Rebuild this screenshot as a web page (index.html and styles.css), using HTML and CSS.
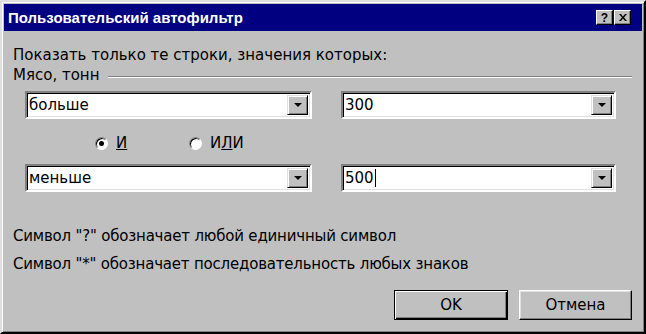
FILE: index.html
```html
<!DOCTYPE html>
<html lang="ru">
  <head>
    <meta charset="UTF-8" />
    <meta name="viewport" content="width=device-width, initial-scale=1.0" />
    <link rel="stylesheet" href="styles.css">
    <title>Пользовательский автофильтр</title>
  </head>
  <body>
    <div class="window">
      <div class="title-bar">
        <span class="title">Пользовательский автофильтр</span>
        <div class="title-buttons">
          <span class="tbtn">?</span>
          <span class="tbtn tbtn-close">
            <svg width="8" height="7" viewBox="0 0 8 7">
              <path d="M0 0h2l2 2.5L6 0h2L5 3.5 8 7H6L4 4.5 2 7H0l3-3.5z" fill="#000" />
            </svg>
          </span>
        </div>
      </div>

      <div class="content">
        <div class="line">Показать только те строки, значения которых:</div>
        <div class="group">
          <span>Мясо, тонн</span>
          <span class="groove"></span>
        </div>

        <div class="combo-row first-row">
          <div class="combo combo-op">
            <span class="combo-text">больше</span>
            <span class="drop"><i></i></span>
          </div>
          <div class="combo combo-val">
            <span class="combo-text">300</span>
            <span class="drop"><i></i></span>
          </div>
        </div>

        <div class="radio-row">
          <label class="radio radio-and">
            <span class="circle checked"></span>
            <span><u>И</u></span>
          </label>
          <label class="radio">
            <span class="circle"></span>
            <span>И<u>Л</u>И</span>
          </label>
        </div>

        <div class="combo-row">
          <div class="combo combo-op">
            <span class="combo-text">меньше</span>
            <span class="drop"><i></i></span>
          </div>
          <div class="combo combo-val">
            <span class="combo-text"><span class="caret">500</span></span>
            <span class="drop"><i></i></span>
          </div>
        </div>

        <div class="hints">
          <div class="line">Символ "?" обозначает любой единичный символ</div>
          <div class="line">Символ "*" обозначает последовательность любых знаков</div>
        </div>

        <div class="actions">
          <button class="btn btn-default">OK</button>
          <button class="btn">Отмена</button>
        </div>
      </div>
    </div>
  </body>
</html>
```

FILE: styles.css
```css
* {
  margin: 0;
  padding: 0;
  box-sizing: border-box;
}

body {
  background: #c0c0c0;
  font-family: "DejaVu Sans", Verdana, sans-serif;
  font-size: 15px;
  color: #000;
}

.window {
  width: 646px;
  height: 334px;
  padding: 2px;
  background: #c0c0c0;
  border: 2px solid;
  border-color: #dfdfdf #000 #000 #dfdfdf;
  box-shadow: inset 1px 1px #fff, inset -1px -1px #808080;
  display: flex;
  flex-direction: column;
}

.title-bar {
  height: 27px;
  background: #000080;
  display: flex;
  align-items: center;
  justify-content: space-between;
  padding: 0 11px 0 4px;
}

.title {
  color: #fff;
  font-family: "Liberation Sans", Arial, sans-serif;
  font-weight: bold;
  font-size: 15px;
}

.title-buttons {
  display: flex;
  gap: 1px;
}

.tbtn {
  width: 17px;
  height: 15px;
  background: #c0c0c0;
  border: 1px solid;
  border-color: #fff #000 #000 #fff;
  box-shadow: inset -1px -1px #808080;
  display: flex;
  align-items: center;
  justify-content: center;
  font-family: "Liberation Sans", Arial, sans-serif;
  font-weight: bold;
  font-size: 12px;
  line-height: 1;
}

.content {
  flex: 1;
  padding: 14px 10px 0 9px;
  display: flex;
  flex-direction: column;
}

.line {
  line-height: 20px;
  white-space: nowrap;
}

.group {
  display: flex;
  align-items: center;
  line-height: 20px;
}

.groove {
  flex: 1;
  margin: 3px 0 0 9px;
  border-top: 1px solid #808080;
  border-bottom: 1px solid #fff;
}

.combo-row {
  display: flex;
  gap: 29px;
  padding-left: 12px;
}

.first-row {
  margin-top: 6px;
}

.combo {
  height: 28px;
  background: #fff;
  border: 2px solid;
  border-color: #808080 #fff #fff #808080;
  box-shadow: inset 1px 1px #000, inset -1px -1px #dfdfdf;
  display: flex;
  align-items: center;
  padding: 2px 2px 2px 2px;
}

.combo-op {
  width: 287px;
}

.combo-val {
  width: 275px;
}

.combo-text {
  flex: 1;
}

.caret {
  border-right: 1px solid #000;
  padding-right: 1px;
}

.drop {
  width: 21px;
  height: 100%;
  background: #c0c0c0;
  border: 1px solid;
  border-color: #dfdfdf #000 #000 #dfdfdf;
  box-shadow: inset 1px 1px #fff, inset -1px -1px #808080;
  display: flex;
  align-items: center;
  justify-content: center;
}

.drop i {
  width: 0;
  height: 0;
  border-left: 4px solid transparent;
  border-right: 4px solid transparent;
  border-top: 4px solid #000;
}

.radio-row {
  height: 45px;
  display: flex;
  align-items: center;
  padding: 3px 0 0 82px;
}

.radio {
  display: flex;
  align-items: center;
  gap: 8px;
}

.radio-and {
  width: 94px;
}

.circle {
  width: 13px;
  height: 13px;
  border-radius: 50%;
  background: #fff;
  border: 1px solid;
  border-color: #808080 #fff #fff #808080;
  box-shadow: inset 1px 1px #000;
  display: flex;
  align-items: center;
  justify-content: center;
}

.circle.checked::after {
  content: "";
  width: 5px;
  height: 5px;
  border-radius: 50%;
  background: #000;
}

.hints {
  margin-top: 34px;
  display: flex;
  flex-direction: column;
  gap: 8px;
  letter-spacing: -0.2px;
}

.actions {
  display: flex;
  justify-content: flex-end;
  gap: 11px;
  margin-top: 16px;
}

.btn {
  width: 113px;
  height: 30px;
  font-family: inherit;
  font-size: 15px;
  background: #c0c0c0;
  border: 1px solid;
  border-color: #fff #000 #000 #fff;
  box-shadow: inset -1px -1px #808080, inset 1px 1px #dfdfdf;
}

.btn-default {
  width: 114px;
  border: 1px solid #000;
  box-shadow: inset 1px 1px #fff, inset -1px -1px #000, inset -2px -2px #808080;
}
```
